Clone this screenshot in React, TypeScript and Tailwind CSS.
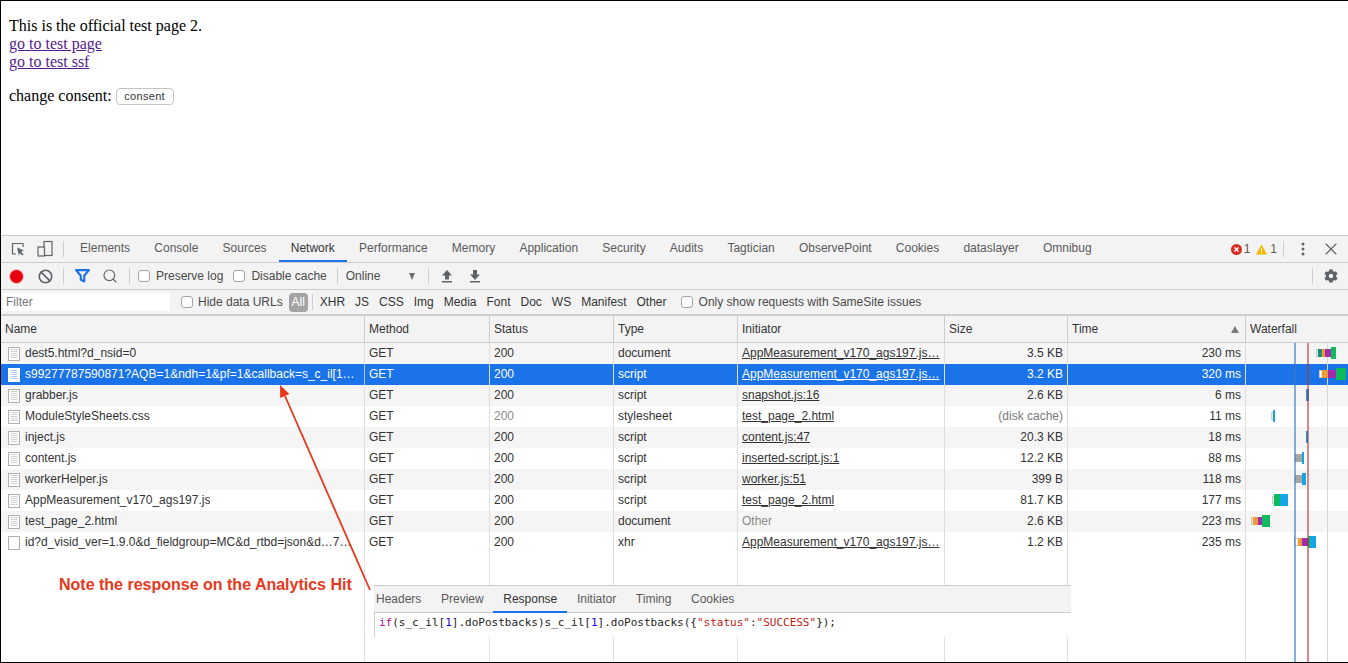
import React from "react";
import { Ban, Search, X } from "lucide-react";
import { FaCog } from "react-icons/fa";

const GRID = "grid grid-cols-[364px_125px_124px_124px_207px_123px_178px_1fr]";
const CELL = "border-r border-[#dedede] px-1 truncate";

type Row = {
  name: string;
  status?: string;
  type: string;
  init: string;
  link: boolean;
  size: string;
  time: string;
  sel?: boolean;
  dim?: boolean;
  blank?: boolean;
};

const ROWS: Row[] = [
  { name: "dest5.html?d_nsid=0", type: "document", init: "AppMeasurement_v170_ags197.js…", link: true, size: "3.5 KB", time: "230 ms" },
  { name: "s99277787590871?AQB=1&ndh=1&pf=1&callback=s_c_il[1…", type: "script", init: "AppMeasurement_v170_ags197.js…", link: true, size: "3.2 KB", time: "320 ms", sel: true },
  { name: "grabber.js", type: "script", init: "snapshot.js:16", link: true, size: "2.6 KB", time: "6 ms" },
  { name: "ModuleStyleSheets.css", type: "stylesheet", init: "test_page_2.html", link: true, size: "(disk cache)", time: "11 ms", dim: true },
  { name: "inject.js", type: "script", init: "content.js:47", link: true, size: "20.3 KB", time: "18 ms" },
  { name: "content.js", type: "script", init: "inserted-script.js:1", link: true, size: "12.2 KB", time: "88 ms" },
  { name: "workerHelper.js", type: "script", init: "worker.js:51", link: true, size: "399 B", time: "118 ms" },
  { name: "AppMeasurement_v170_ags197.js", type: "script", init: "test_page_2.html", link: true, size: "81.7 KB", time: "177 ms" },
  { name: "test_page_2.html", type: "document", init: "Other", link: false, size: "2.6 KB", time: "223 ms" },
  { name: "id?d_visid_ver=1.9.0&d_fieldgroup=MC&d_rtbd=json&d…7…", type: "xhr", init: "AppMeasurement_v170_ags197.js…", link: true, size: "1.2 KB", time: "235 ms", blank: true },
];

const TABS = ["Elements", "Console", "Sources", "Network", "Performance", "Memory", "Application", "Security", "Audits", "Tagtician", "ObservePoint", "Cookies", "dataslayer", "Omnibug"];
const TYPES = ["XHR", "JS", "CSS", "Img", "Media", "Font", "Doc", "WS", "Manifest", "Other"];
const HEAD = ["Name", "Method", "Status", "Type", "Initiator", "Size", "Time", "Waterfall"];
const DETAIL = ["Headers", "Preview", "Response", "Initiator", "Timing", "Cookies"];

function DocIcon({ sel, blank }: { sel?: boolean; blank?: boolean }) {
  return (
    <svg width="12" height="14" viewBox="0 0 12 14" className="shrink-0">
      <rect x="0.5" y="0.5" width="11" height="13" fill="#fff" stroke={sel ? "#fff" : "#b0b0b0"} />
      {!blank &&
        [2, 4, 6, 8, 10].map((y) => (
          <line key={y} x1="2.5" x2="9.5" y1={y + 0.5} y2={y + 0.5} stroke={sel ? "#b6cff2" : "#d2d2d2"} />
        ))}
    </svg>
  );
}

function Check() {
  return <span className="block w-3 h-3 rounded-[3px] border border-[#a5a5a5] bg-white shrink-0" />;
}

function Sep() {
  return <span className="block w-px h-4 bg-[#cfcfcf] shrink-0" />;
}

// x0, x1 in page pixels; tall = the taller download segment
type Seg = [number, number, string, boolean?];
const BARS: { y: number; segs: Seg[] }[] = [
  { y: 353, segs: [[1316, 1318, "#ffffff"], [1318, 1322, "#1a8f78"], [1322, 1325, "#f09a33"], [1325, 1331, "#a22bb0"], [1331, 1336, "#0dbb5c", true]] },
  { y: 374, segs: [[1319, 1322, "#ffffff"], [1322, 1328, "#f09a33"], [1328, 1336, "#a22bb0"], [1336, 1346, "#0dbb5c", true]] },
  { y: 395, segs: [[1306, 1309, "#1e9be0", true]] },
  { y: 416, segs: [[1271, 1273, "#ffffff"], [1273, 1275, "#14a5e8", true]] },
  { y: 437, segs: [[1306, 1308, "#1e9be0", true]] },
  { y: 458, segs: [[1295, 1302, "#a6a6a6"], [1302, 1304, "#14a5e8", true]] },
  { y: 479, segs: [[1295, 1302, "#a6a6a6"], [1302, 1306, "#14a5e8", true]] },
  { y: 500, segs: [[1272, 1274, "#ffffff"], [1274, 1280, "#0dbb5c", true], [1280, 1288, "#14a5e8", true]] },
  { y: 521, segs: [[1251, 1253, "#ffffff"], [1253, 1258, "#f09a33"], [1258, 1262, "#a22bb0"], [1262, 1270, "#0dbb5c", true]] },
  { y: 542, segs: [[1294, 1298, "#ffffff"], [1298, 1302, "#f09a33"], [1302, 1308, "#a22bb0"], [1308, 1310, "#0dbb5c", true], [1310, 1316, "#14a5e8", true]] },
];

export default function App() {
  return (
    <div className="relative w-[1348px] h-[663px] overflow-hidden bg-white border-l border-t border-b border-black flex flex-col font-['Liberation_Sans',Arial,sans-serif] text-[12px] text-[#333]">
      {/* Page */}
      <div className="h-[234px] shrink-0 pt-[16px] pl-[8px] font-['Liberation_Serif','Times_New_Roman',serif] text-[16px] leading-[18px] text-black">
        <div>This is the official test page 2.</div>
        <div><a className="underline text-[#551a8b]">go to test page</a></div>
        <div><a className="underline text-[#551a8b]">go to test ssf</a></div>
        <div className="mt-[16px] flex items-center h-[18px]">
          <span>change consent:</span>
          <span className="ml-[4px] h-[17px] w-[58px] rounded-[4px] border border-[#c4c4c4] bg-white flex items-center justify-center font-['Liberation_Sans',sans-serif] text-[11px] tracking-[0.3px] text-[#333]">consent</span>
        </div>
      </div>

      {/* DevTools */}
      <div className="flex-1 min-h-0 flex flex-col bg-white border-t border-[#c8c8c8]">
        {/* Main tabs */}
        <div className="h-[27px] shrink-0 flex items-center bg-[#f3f3f3] border-b border-[#cccccc]">
          <svg width="16" height="16" viewBox="0 0 16 16" className="ml-[9px] shrink-0" fill="none">
            <path d="M6 13H2.5V2.5H13V6" stroke="#5f6368" strokeWidth="1.2" />
            <path d="M7 6.5l7 3-3 1.2 2.6 2.6-1.2 1.2-2.6-2.6L9 15z" fill="#5f6368" />
          </svg>
          <svg width="16" height="18" viewBox="0 0 16 18" className="ml-[11px] shrink-0" fill="none">
            <rect x="7" y="1.5" width="8" height="14" stroke="#5f6368" strokeWidth="1.2" />
            <rect x="1" y="7" width="6.5" height="9" fill="#f3f3f3" stroke="#5f6368" strokeWidth="1.2" />
          </svg>
          <span className="ml-[10px] mr-[4px]"><Sep /></span>
          <div className="flex h-full">
            {TABS.map((t) => (
              <div
                key={t}
                className={`h-full flex items-center px-[12.1px] border-b-2 -mb-px ${t === "Network" ? "border-[#1a73e8] text-[#333]" : "border-transparent text-[#5a5a5a]"}`}
              >
                {t}
              </div>
            ))}
          </div>
          <div className="ml-auto flex items-center text-[#5a5a5a]">
            <svg width="11" height="11" viewBox="0 0 11 11">
              <circle cx="5.5" cy="5.5" r="5.5" fill="#d93025" />
              <path d="M3.5 3.5l4 4M7.5 3.5l-4 4" stroke="#fff" strokeWidth="1.4" />
            </svg>
            <span className="ml-[2px]">1</span>
            <svg width="11" height="11" viewBox="0 0 12 11" className="ml-[5.5px]">
              <path d="M6 0l6 11H0z" fill="#f2b600" />
              <rect x="5.4" y="3.5" width="1.2" height="4" fill="#fff" />
              <rect x="5.4" y="8.3" width="1.2" height="1.2" fill="#fff" />
            </svg>
            <span className="ml-[3.3px]">1</span>
            <span className="ml-[6px] mr-[17px]"><Sep /></span>
            <svg width="4" height="14" viewBox="0 0 4 14" className="shrink-0">
              <circle cx="2" cy="2" r="1.5" fill="#5f6368" />
              <circle cx="2" cy="7" r="1.5" fill="#5f6368" />
              <circle cx="2" cy="12" r="1.5" fill="#5f6368" />
            </svg>
            <X size={20} strokeWidth={1.4} className="ml-[16px] mr-[7px] text-[#5f6368]" />
          </div>
        </div>

        {/* Toolbar */}
        <div className="h-[27px] shrink-0 flex items-center bg-[#f3f3f3] border-b border-[#cccccc] pl-[9px]">
          <span className="w-[13px] h-[13px] rounded-full bg-[#e8000f] shadow-[0_0_0_1px_#f6b8b8] shrink-0" />
          <Ban size={15} strokeWidth={2.6} className="ml-[15px] text-[#5f6368]" />
          <span className="ml-[10px]"><Sep /></span>
          <svg width="15" height="14" viewBox="0 0 14 13" className="ml-[11px] shrink-0" fill="none">
            <path d="M1 1h12L8.6 6.3V11.6L5.4 10V6.3z" stroke="#1a73e8" strokeWidth="2" strokeLinejoin="round" />
          </svg>
          <Search size={16} strokeWidth={1.7} className="ml-[12px] text-[#5f6368]" />
          <span className="ml-[11px]"><Sep /></span>
          <span className="ml-[8px]"><Check /></span>
          <span className="ml-[6px] text-[#4a4a4a]">Preserve log</span>
          <span className="ml-[10px]"><Check /></span>
          <span className="ml-[6px] text-[#4a4a4a]">Disable cache</span>
          <span className="ml-[10px]"><Sep /></span>
          <span className="ml-[8px] w-[63px] text-[#4a4a4a]">Online</span>
          <span className="w-0 h-0 border-l-[3.5px] border-r-[3.5px] border-t-[7px] border-l-transparent border-r-transparent border-t-[#6e6e6e]" />
          <span className="ml-[13px]"><Sep /></span>
          <svg width="12" height="13" viewBox="0 0 12 13" className="ml-[12px] shrink-0">
            <path d="M6 0L11 5.5H8V9.5H4V5.5H1z" fill="#5f6368" />
            <rect x="1" y="11" width="10" height="1.5" fill="#5f6368" />
          </svg>
          <svg width="12" height="13" viewBox="0 0 12 13" className="ml-[16px] shrink-0">
            <path d="M4 0H8V4.5H11L6 10L1 4.5H4z" fill="#5f6368" />
            <rect x="1" y="11" width="10" height="1.5" fill="#5f6368" />
          </svg>
          <div className="ml-auto flex items-center">
            <Sep />
            <FaCog size={14} className="ml-[11px] mr-[10px] text-[#5f6368]" />
          </div>
        </div>

        {/* Filter bar */}
        <div className="h-[26px] shrink-0 flex items-center bg-[#f3f3f3] border-b-2 border-[#cfcfcf] pl-[2px] text-[#333]">
          <div className="w-[167px] h-[18px] bg-white pl-[3px] flex items-center text-[#757575] text-[12px]">Filter</div>
          <span className="ml-[11px]"><Check /></span>
          <span className="ml-[5px] text-[#4a4a4a]">Hide data URLs</span>
          <span className="ml-[6px] w-[19px] h-[19px] rounded-[4px] bg-[#a3a3a3] text-white flex items-center justify-center">All</span>
          <span className="ml-[4px]"><Sep /></span>
          <div className="ml-[7px] flex gap-[10px] text-[#333]">
            {TYPES.map((t) => <span key={t}>{t}</span>)}
          </div>
          <span className="ml-[14px]"><Check /></span>
          <span className="ml-[6px] text-[#4a4a4a]">Only show requests with SameSite issues</span>
        </div>

        {/* Table header */}
        <div className={`${GRID} h-[27px] shrink-0 bg-[#f3f3f3] border-b border-[#cccccc]`}>
          {HEAD.map((h, i) => (
            <div key={h} className={`relative flex items-center pl-1 text-[#333] ${i < 7 ? "border-r border-[#cccccc]" : ""}`}>
              {h}
              {h === "Time" && (
                <span className="ml-auto mr-[6px] w-0 h-0 border-l-[4px] border-r-[4px] border-b-[7px] border-l-transparent border-r-transparent border-b-[#7a7a7a]" />
              )}
            </div>
          ))}
        </div>

        {/* Rows */}
        <div className="flex-1 min-h-0 flex flex-col">
          {ROWS.map((r, i) => (
            <div
              key={r.name}
              className={`${GRID} h-[21px] shrink-0 items-stretch leading-[21px] ${r.sel ? "bg-[#1a73e8] text-white" : i % 2 === 0 ? "bg-[#f5f5f5]" : "bg-white"}`}
            >
              <div className={`border-r ${r.sel ? "border-[#a9c6ee]" : "border-[#dedede]"} flex items-center pl-[7px] pr-1 gap-[5px] overflow-hidden`}>
                <DocIcon sel={r.sel} blank={r.blank} />
                <span className="truncate">{r.name}</span>
              </div>
              <div className={`${CELL} ${r.sel ? "border-[#a9c6ee]" : ""}`}>GET</div>
              <div className={`${CELL} ${r.sel ? "border-[#a9c6ee]" : ""} ${r.dim ? "text-[#8a8a8a]" : ""}`}>200</div>
              <div className={`${CELL} ${r.sel ? "border-[#a9c6ee]" : ""}`}>{r.type}</div>
              <div className={`${CELL} ${r.sel ? "border-[#a9c6ee]" : ""} ${r.link ? "underline" : "text-[#8a8a8a]"}`}>{r.init}</div>
              <div className={`${CELL} ${r.sel ? "border-[#a9c6ee]" : ""} text-right ${r.dim ? "text-[#7a7a7a]" : ""}`}>{r.size}</div>
              <div className={`${CELL} ${r.sel ? "border-[#a9c6ee]" : ""} text-right`}>{r.time}</div>
              <div />
            </div>
          ))}
          <div className={`${GRID} flex-1`}>
            {HEAD.map((h, i) => (
              <div key={h} className={i < 7 ? "border-r border-[#e0e0e0]" : ""} />
            ))}
          </div>
        </div>
      </div>

      {/* Waterfall chart */}
      <svg width="102" height="319" viewBox="1246 343 102 319" className="absolute left-[1245px] top-[342px] pointer-events-none">
        <line x1="1327.5" x2="1327.5" y1="343" y2="662" stroke="#d6d6d6" />
        {BARS.map((b) =>
          b.segs.map(([a, c, col, tall]) =>
            col === "#ffffff" ? (
              <rect key={`${b.y}-${a}`} x={a + 0.5} y={b.y - 3.5} width={c - a - 0.5} height="7" fill="#fff" stroke="#c8ccc8" />
            ) : (
              <rect key={`${b.y}-${a}`} x={a} y={tall ? b.y - 6 : b.y - 4} width={c - a} height={tall ? 12 : 8} fill={col} />
            )
          )
        )}
        <rect x="1294" y="343" width="2" height="319" fill="#3b78c4" opacity="0.6" />
        <rect x="1307" y="343" width="2" height="319" fill="#b82a32" opacity="0.55" />
      </svg>

      {/* Response panel */}
      <div className="absolute left-[373px] top-[584px] w-[697px] h-[52px] bg-white flex flex-col border-t border-[#cccccc]">
        <div className="h-[27px] shrink-0 bg-[#f3f3f3] border-b border-[#cccccc] flex">
          {DETAIL.map((d) => (
            <div
              key={d}
              className={`h-[27px] flex items-center px-[9.8px] first:pl-[2px] text-[12px] border-b-2 ${d === "Response" ? "border-[#1a73e8] text-[#333]" : "border-transparent text-[#5a5a5a]"}`}
            >
              {d}
            </div>
          ))}
        </div>
        <div className="flex-1 border-l border-[#d0d0d0] pl-[4px] pt-[3px] font-['DejaVu_Sans_Mono',monospace] text-[11px] leading-[14px] text-[#222] whitespace-nowrap">
          <span className="text-[#aa0d91]">if</span>(s_c_il[<span className="text-[#1c00cf]">1</span>].doPostbacks)s_c_il[<span className="text-[#1c00cf]">1</span>].doPostbacks({"{"}<span className="text-[#c41a16]">"status"</span>:<span className="text-[#c41a16]">"SUCCESS"</span>{"}"});
        </div>
      </div>

      {/* Annotation */}
      <div className="absolute left-[58px] top-[575px] font-['Liberation_Sans',Arial,sans-serif] font-bold text-[16px] leading-[18px] text-[#e8381b] whitespace-nowrap">
        Note the response on the Analytics Hit
      </div>
      <svg width="110" height="220" viewBox="270 380 110 220" className="absolute left-[269px] top-[379px] pointer-events-none">
        <line x1="370" y1="590" x2="285" y2="396" stroke="#e8381b" strokeWidth="1.8" />
        <path d="M280 385L289.4 394L280.2 398z" fill="#e8381b" />
      </svg>
    </div>
  );
}
